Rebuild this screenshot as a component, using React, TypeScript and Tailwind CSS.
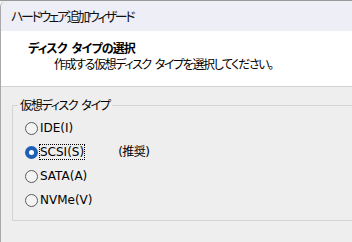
import React from "react";

const jp = "font-['Noto_Sans_CJK_JP',sans-serif] [font-feature-settings:'palt']";
const lat = "font-['DejaVu_Sans','Noto_Sans_CJK_JP',sans-serif]";

function Radio({ checked }: { checked?: boolean }) {
  if (checked) {
    return (
      <span className="w-[13px] h-[13px] rounded-full bg-[#1f5fb5] flex items-center justify-center shrink-0">
        <span className="w-[5px] h-[5px] rounded-full bg-white" />
      </span>
    );
  }
  return <span className="w-[13px] h-[13px] rounded-full border border-[#5a5a5a] bg-[#f4f4f4] shrink-0" />;
}

function Row({ label, checked, extra }: { label: string; checked?: boolean; extra?: string }) {
  return (
    <div className={"h-[24px] flex items-center " + lat}>
      <Radio checked={checked} />
      <span
        className={
          "ml-[1px] leading-[14px] border border-dotted " +
          (checked ? "border-black" : "border-transparent")
        }
      >
        {label}
      </span>
      {extra && <span className="ml-[33px] tracking-[-0.5px]">{extra}</span>}
    </div>
  );
}

export default function App() {
  return (
    <div className={"w-[352px] h-[242px] overflow-hidden bg-[#f4f4f4] text-black " + jp}>
      <div className="h-[1px] bg-[#9a9a9a]" />
      <div className="h-[241px] flex flex-col border-l border-[#a8a8a8] rounded-tl-[6px] overflow-hidden">
        <div className="h-[30px] bg-[#eeeef7] flex items-center pl-[10px] text-[13px] tracking-[-2.4px] text-[#111]">
          ハードウェア追加ウィザード
        </div>
        <div className="h-[56px] bg-white border-b border-[#d2d2d2] pt-[9px] text-[12px] leading-[16px]">
          <div className="pl-[27px] font-bold tracking-[-0.9px] flex">
            <span>ディスク</span>
            <span className="ml-[5px]">タイプの選択</span>
          </div>
          <div className="pl-[53px] tracking-[-1.4px] flex">
            <span>作成する仮想ディスク</span>
            <span className="ml-[4px]">タイプを選択してください。</span>
          </div>
        </div>
        <div className="flex-1 bg-[#eeeeee] pl-[11px] pt-[18px] text-[12px]">
          <div className="relative w-[360px] h-[116px] border border-[#d4d4d4] pl-[12px] pt-[10px]">
            <span className="absolute -top-[9px] left-[5px] px-[2px] bg-[#eeeeee] leading-[16px] tracking-[-1.3px] flex">
              <span>仮想ディスク</span>
              <span className="ml-[4px]">タイプ</span>
            </span>
            <Row label="IDE(I)" />
            <Row label="SCSI(S)" checked extra="(推奨)" />
            <Row label="SATA(A)" />
            <Row label="NVMe(V)" />
          </div>
        </div>
      </div>
    </div>
  );
}
